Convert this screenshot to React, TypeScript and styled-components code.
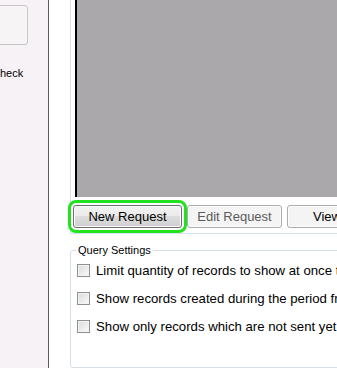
import * as React from 'react';
import styled, { createGlobalStyle } from 'styled-components';

const GlobalStyle = createGlobalStyle`
  html, body {
    margin: 0;
    padding: 0;
    background: #fff;
  }
  body {
    font-family: "Liberation Sans", Arial, sans-serif;
    font-size: 13px;
    color: #000;
  }
`;

const Screen = styled.div`
  display: flex;
  width: 337px;
  height: 368px;
  overflow: hidden;
  background: #fff;
`;

const SidePane = styled.div`
  flex: 0 0 48px;
  background: #f6f2f5;
  border-right: 1px solid #5c5c5c;
  overflow: hidden;
  padding-top: 5px;
`;

const SideCard = styled.div`
  margin-left: -6px;
  width: 32px;
  height: 38px;
  border: 1px solid #c6c6c6;
  border-radius: 3px;
  background: #f7f4f6;
`;

const SideLabel = styled.div`
  margin: 22px 0 0 -8px;
  font-size: 11px;
  white-space: nowrap;
`;

const Gutter = styled.div`
  flex: 0 0 21px;
`;

const Main = styled.div`
  flex: 1;
  min-width: 0;
  display: flex;
  flex-direction: column;
`;

const ViewerPanel = styled.div`
  border-left: 1px solid #d6e3ef;
  border-bottom: 1px solid #d6e3ef;
`;

const Viewport = styled.div`
  margin-left: 4px;
  height: 197px;
  border-left: 2px solid #000;
  background: #aba8ab;
`;

const ButtonRow = styled.div`
  display: flex;
  gap: 5px;
  padding: 8px 0 5px 2px;
`;

const ActionButton = styled.button<{ $w: number; $primary?: boolean; $dim?: boolean }>`
  flex: 0 0 ${p => p.$w}px;
  height: 23px;
  padding: 0;
  font-family: "Liberation Sans", Arial, sans-serif;
  font-size: 13px;
  color: ${p => (p.$dim ? '#5a5a5a' : '#000')};
  border: 1px solid ${p => (p.$primary ? '#707070' : '#adadad')};
  border-radius: 3px;
  background: ${p =>
    p.$primary
      ? 'linear-gradient(#f2f2f2 0%, #ebebeb 50%, #dddddd 50%, #cfcfcf 100%)'
      : '#f4f4f4'};
  box-shadow: inset 0 0 0 1px ${p => (p.$primary ? '#fbfbfb' : '#fcfcfc')};
  outline: ${p => (p.$primary ? '3px solid #22e11f' : 'none')};
  outline-offset: 2px;
  white-space: nowrap;
`;

const GroupBox = styled.fieldset`
  margin: 10px 0 0 0;
  padding: 0 0 0 6px;
  width: 300px;
  height: 140px;
  border: 1px solid #d5dfe6;
  border-radius: 3px;
`;

const GroupTitle = styled.legend`
  margin-left: -1px;
  padding: 0 2px;
  font-size: 11px;
  color: #000;
`;

const OptionRow = styled.label`
  display: flex;
  align-items: center;
  gap: 6px;
  height: 28px;
  font-size: 13.2px;
  white-space: nowrap;
`;

const CheckBox = styled.span`
  flex: 0 0 13px;
  height: 13px;
  box-sizing: border-box;
  border: 1px solid #8e8f8f;
  background: linear-gradient(135deg, #d9d9d9 0%, #ededed 60%, #fafafa 100%);
  box-shadow: inset 0 0 0 1px #f4f4f4;
`;

const options = [
  'Limit quantity of records to show at once to',
  'Show records created during the period from',
  'Show only records which are not sent yet',
];

export default function App() {
  return (
    <>
      <GlobalStyle />
      <Screen>
        <SidePane>
          <SideCard />
          <SideLabel>Check</SideLabel>
        </SidePane>
        <Gutter />
        <Main>
          <ViewerPanel>
            <Viewport />
            <ButtonRow>
              <ActionButton $w={109} $primary>New Request</ActionButton>
              <ActionButton $w={95} $dim>Edit Request</ActionButton>
              <ActionButton $w={80}>View</ActionButton>
            </ButtonRow>
          </ViewerPanel>
          <GroupBox>
            <GroupTitle>Query Settings</GroupTitle>
            {options.map(text => (
              <OptionRow key={text}>
                <CheckBox />
                <span>{text}</span>
              </OptionRow>
            ))}
          </GroupBox>
        </Main>
      </Screen>
    </>
  );
}
